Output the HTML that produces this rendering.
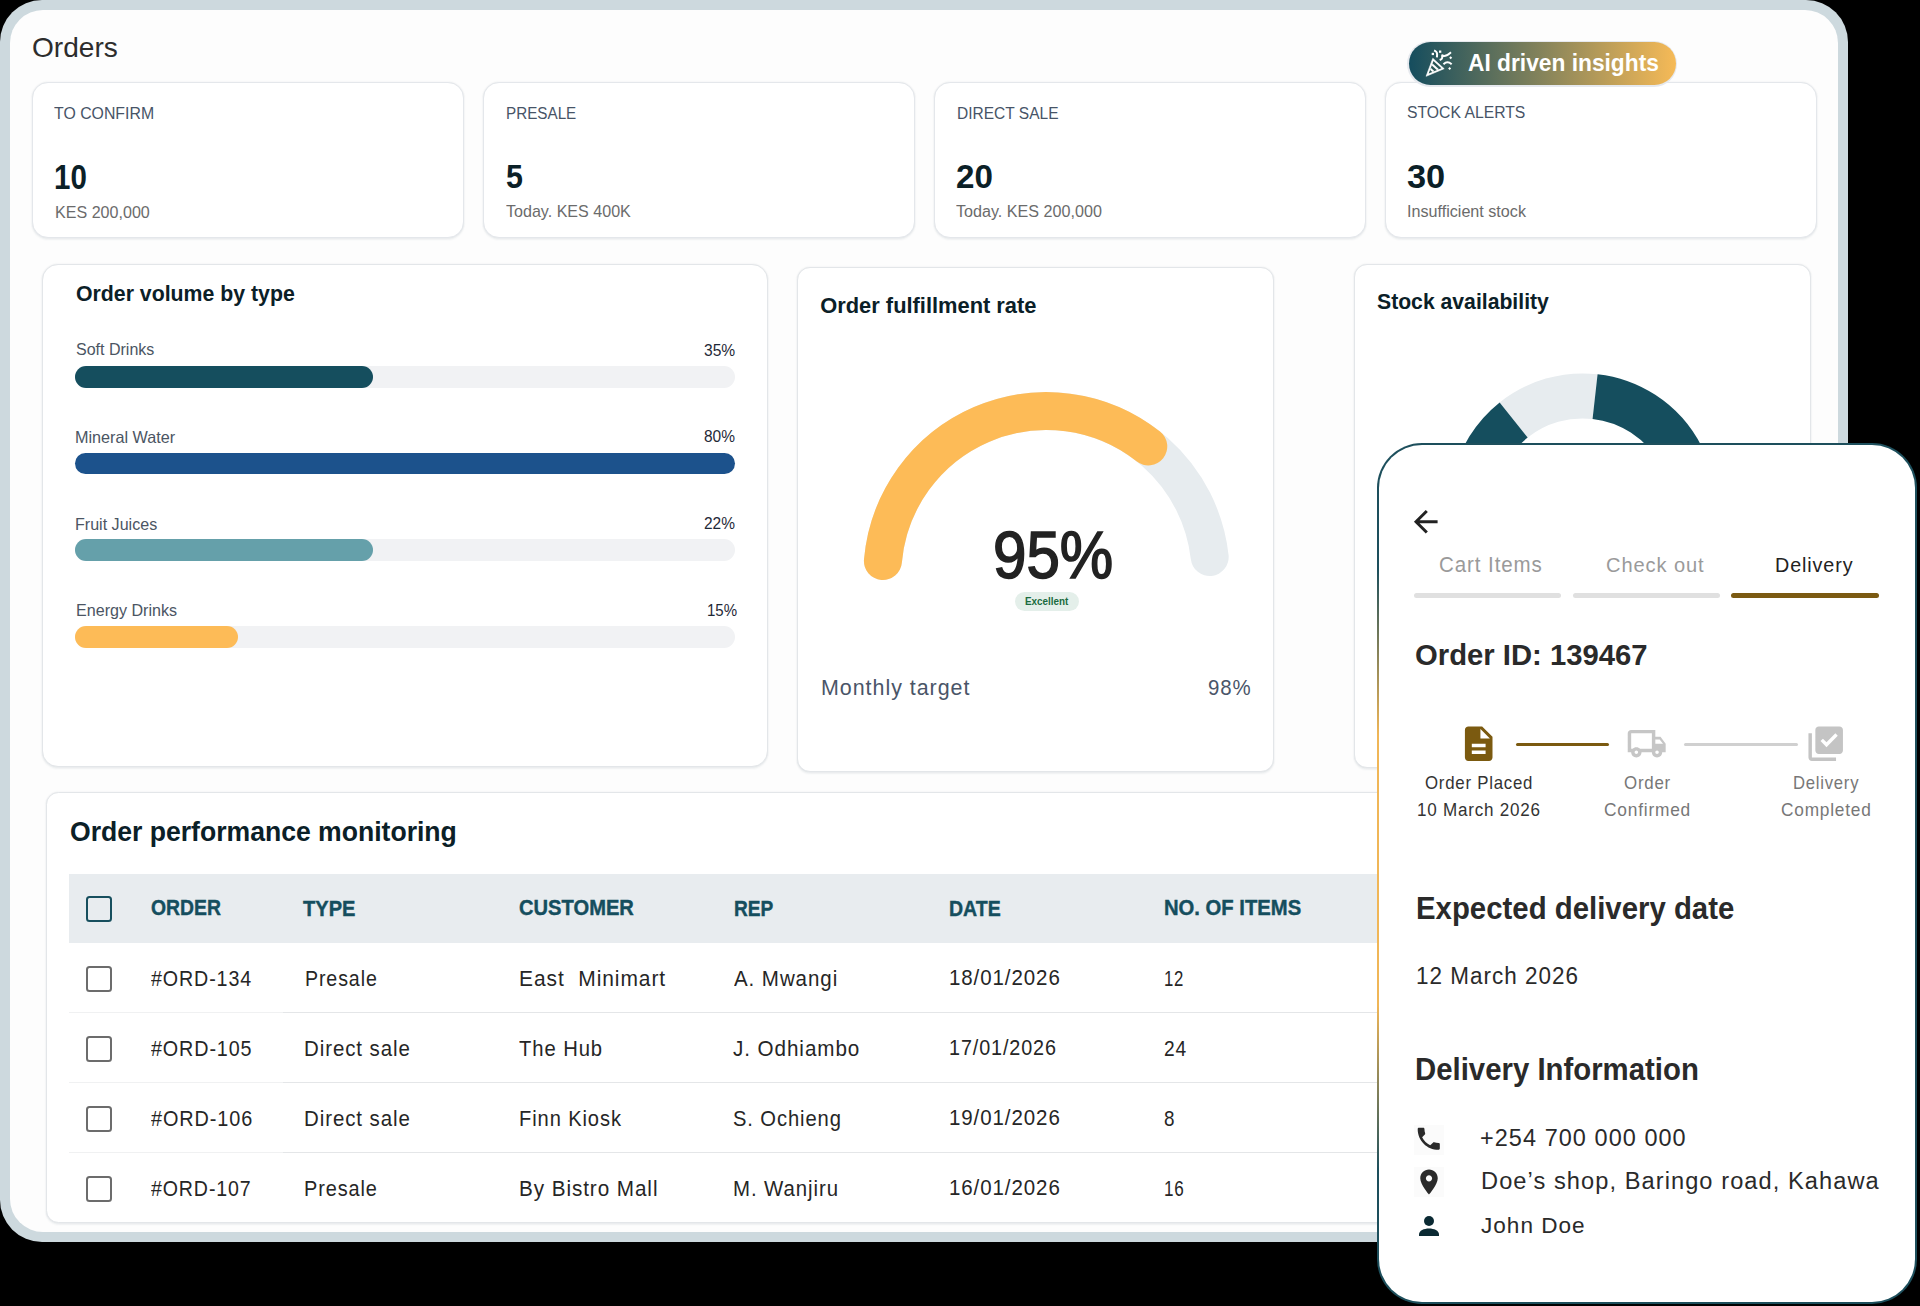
<!DOCTYPE html>
<html><head><meta charset="utf-8"><title>Orders</title><style>
html,body{margin:0;padding:0;}
body{width:1920px;height:1306px;background:#000;position:relative;overflow:hidden;font-family:"Liberation Sans", sans-serif;}
.t{position:absolute;line-height:1;white-space:nowrap;transform-origin:0 0;}
.r{position:absolute;}
</style></head><body>
<div class="r" style="left:0px;top:0px;width:1848px;height:1242px;background:#cdd9de;border-radius:42px;"></div>
<div class="r" style="left:10px;top:10px;width:1828px;height:1222px;background:#fdfdfd;border-radius:33px;"></div>
<div class="t" style="left:32.20px;top:33.59px;font-size:27.17px;color:#2d2d2d;transform:scaleX(1.0345);">Orders</div>
<div class="r" style="left:31.6px;top:81.7px;width:432.1px;height:156.6px;background:#fff;border:1px solid #e4e7eb;border-radius:16px;box-sizing:border-box;box-shadow:0 0 2px rgba(40,60,80,0.10),0 1.5px 2px rgba(40,60,80,0.06);"></div>
<div class="r" style="left:482.7px;top:81.7px;width:432.1px;height:156.6px;background:#fff;border:1px solid #e4e7eb;border-radius:16px;box-sizing:border-box;box-shadow:0 0 2px rgba(40,60,80,0.10),0 1.5px 2px rgba(40,60,80,0.06);"></div>
<div class="r" style="left:933.8px;top:81.7px;width:432.1px;height:156.6px;background:#fff;border:1px solid #e4e7eb;border-radius:16px;box-sizing:border-box;box-shadow:0 0 2px rgba(40,60,80,0.10),0 1.5px 2px rgba(40,60,80,0.06);"></div>
<div class="r" style="left:1384.9px;top:81.7px;width:432.1px;height:156.6px;background:#fff;border:1px solid #e4e7eb;border-radius:16px;box-sizing:border-box;box-shadow:0 0 2px rgba(40,60,80,0.10),0 1.5px 2px rgba(40,60,80,0.06);"></div>
<div class="t" style="left:54.30px;top:104.94px;font-size:17.19px;color:#475467;transform:scaleX(0.9222);">TO CONFIRM</div>
<div class="t" style="left:505.60px;top:104.84px;font-size:17.19px;color:#475467;transform:scaleX(0.8864);">PRESALE</div>
<div class="t" style="left:956.90px;top:105.16px;font-size:17.05px;color:#475467;transform:scaleX(0.9114);">DIRECT SALE</div>
<div class="t" style="left:1407.20px;top:105.21px;font-size:16.76px;color:#475467;transform:scaleX(0.9390);">STOCK ALERTS</div>
<div class="t" style="left:54.00px;top:159.61px;font-size:34.24px;color:#0b2027;font-weight:bold;transform:scaleX(0.8614);">10</div>
<div class="t" style="left:505.60px;top:159.65px;font-size:33.72px;color:#0b2027;font-weight:bold;transform:scaleX(0.9014);">5</div>
<div class="t" style="left:956.40px;top:159.91px;font-size:33.52px;color:#0b2027;font-weight:bold;transform:scaleX(0.9898);">20</div>
<div class="t" style="left:1407.20px;top:159.81px;font-size:33.52px;color:#0b2027;font-weight:bold;transform:scaleX(1.0247);">30</div>
<div class="t" style="left:54.50px;top:203.99px;font-size:16.19px;color:#6b6b6b;transform:scaleX(0.9935);">KES 200,000</div>
<div class="t" style="left:505.60px;top:203.79px;font-size:16.55px;color:#6b6b6b;transform:scaleX(0.9727);">Today. KES 400K</div>
<div class="t" style="left:956.40px;top:204.15px;font-size:16.00px;color:#6b6b6b;transform:scaleX(1.0083);">Today. KES 200,000</div>
<div class="t" style="left:1407.20px;top:203.77px;font-size:16.69px;color:#6b6b6b;transform:scaleX(0.9667);">Insufficient stock</div>
<div class="r" style="left:1407px;top:40.5px;width:270px;height:46px;background:#e6e9ee;border-radius:23px;"></div>
<div class="r" style="left:1408.5px;top:42px;width:267px;height:43px;background:linear-gradient(90deg,#154d5e 0%,#f6ba57 100%);border-radius:21.5px;"></div>
<div class="t" style="left:1468.00px;top:51.34px;font-size:24.34px;color:#fff;font-weight:bold;transform:scaleX(0.9351);">AI driven insights</div>
<svg class="r" style="left:1418px;top:44px" width="40" height="40" viewBox="0 0 40 40"><defs><clipPath id="ci"><polygon points="10.71,29.58 15.43,16.91 23.45,24.23"/></clipPath></defs><polygon points="8.10,32.30 14.80,14.30 26.20,24.70" fill="#fff" stroke="#fff" stroke-width="0.6" stroke-linejoin="round"/><polygon points="10.71,29.58 15.43,16.91 23.45,24.23" fill="#2c5857"/><g clip-path="url(#ci)"><line x1="-3.35" y1="4.52" x2="26.21" y2="31.48" stroke="#fff" stroke-width="2.0"/><line x1="-6.32" y1="7.77" x2="23.24" y2="34.73" stroke="#fff" stroke-width="2.0"/></g><g fill="none" stroke="#fff" stroke-width="2" stroke-linecap="square" stroke-linejoin="round"><path d="M17 6.9 C18.7 7.6 19.4 9.6 19 12.4"/><path d="M22.6 15.6 C23.9 15 24.6 13.6 24.2 11.3 C26.4 13.1 29 11.6 32.2 8.9"/><path d="M26.2 19.6 C27.8 17.7 31 17.6 32.9 19.6"/></g><g fill="#fff"><rect x="13.7" y="8.8" width="2.3" height="2.3"/><rect x="21" y="6.5" width="2.3" height="2.3"/><path d="M32.7 12.2 L34.2 13.7 L32.7 15.2 L31.2 13.7Z"/><path d="M31.6 22.9 L33.1 24.4 L31.6 25.9 L30.1 24.4Z"/></g></svg>
<div class="r" style="left:42.1px;top:264.4px;width:726px;height:502.7px;background:#fff;border:1px solid #e3e6e9;border-radius:16px;box-sizing:border-box;box-shadow:0 0 2px rgba(40,60,80,0.10),0 1.5px 2px rgba(40,60,80,0.06);"></div>
<div class="t" style="left:75.60px;top:281.91px;font-size:22.90px;color:#0b2027;font-weight:bold;transform:scaleX(0.9295);">Order volume by type</div>
<div class="t" style="left:75.60px;top:341.94px;font-size:16.97px;color:#4b5563;transform:scaleX(0.9450);">Soft Drinks</div>
<div class="t" style="left:75.40px;top:429.12px;font-size:16.28px;color:#4b5563;transform:scaleX(0.9950);">Mineral Water</div>
<div class="t" style="left:75.40px;top:516.50px;font-size:15.59px;color:#4b5563;transform:scaleX(1.0317);">Fruit Juices</div>
<div class="t" style="left:75.70px;top:602.97px;font-size:15.86px;color:#4b5563;transform:scaleX(1.0149);">Energy Drinks</div>
<div class="t" style="left:703.75px;top:342.06px;font-size:17.05px;color:#1f2937;transform:scaleX(0.9160);">35%</div>
<div class="t" style="left:703.70px;top:428.71px;font-size:16.76px;color:#1f2937;transform:scaleX(0.9242);">80%</div>
<div class="t" style="left:703.70px;top:515.51px;font-size:16.76px;color:#1f2937;transform:scaleX(0.9242);">22%</div>
<div class="t" style="left:706.90px;top:602.30px;font-size:17.00px;color:#1f2937;transform:scaleX(0.8847);">15%</div>
<div class="r" style="left:75px;top:366px;width:660px;height:21.5px;background:#f1f2f4;border-radius:11px;"></div>
<div class="r" style="left:75px;top:366px;width:298px;height:21.5px;background:#154e5e;border-radius:11px;"></div>
<div class="r" style="left:75px;top:452.6px;width:660px;height:21.5px;background:#f1f2f4;border-radius:11px;"></div>
<div class="r" style="left:75px;top:452.6px;width:660px;height:21.5px;background:#1c528c;border-radius:11px;"></div>
<div class="r" style="left:75px;top:539.1px;width:660px;height:21.5px;background:#f1f2f4;border-radius:11px;"></div>
<div class="r" style="left:75px;top:539.1px;width:298px;height:21.5px;background:#65a0aa;border-radius:11px;"></div>
<div class="r" style="left:75px;top:626px;width:660px;height:21.5px;background:#f1f2f4;border-radius:11px;"></div>
<div class="r" style="left:75px;top:626px;width:163px;height:21.5px;background:#fdbb57;border-radius:11px;"></div>
<div class="r" style="left:797.1px;top:267px;width:477.4px;height:504.7px;background:#fff;border:1px solid #e3e6e9;border-radius:13px;box-sizing:border-box;box-shadow:0 0 2px rgba(40,60,80,0.10),0 1.5px 2px rgba(40,60,80,0.06);"></div>
<div class="t" style="left:820.25px;top:294.94px;font-size:21.86px;color:#0b2027;font-weight:bold;">Order fulfillment rate</div>
<svg class="r" style="left:0;top:0" width="1920" height="1306"><path d="M882.92 560.99 A164.2 164.2 0 0 1 1209.68 557.00" fill="none" stroke="#e7ecef" stroke-width="38" stroke-linecap="round"/><path d="M882.92 560.99 A164.2 164.2 0 0 1 1148.27 446.44" fill="none" stroke="#fdbb57" stroke-width="38" stroke-linecap="round"/></svg>
<div class="t" style="left:993.30px;top:521.81px;font-size:66.53px;color:#222;transform:scaleX(0.9036);-webkit-text-stroke:1.6px #222;">95%</div>
<div class="r" style="left:1015.2px;top:592px;width:63.6px;height:19px;background:#e4efea;border-radius:10px;"></div>
<div class="t" style="left:1024.90px;top:595.92px;font-size:11.31px;color:#1a6b40;font-weight:bold;transform:scaleX(0.8739);">Excellent</div>
<div class="t" style="left:821.40px;top:677.45px;font-size:21.79px;color:#4a5568;transform:scaleX(0.9846);letter-spacing:0.981px;">Monthly target</div>
<div class="t" style="left:1208.20px;top:677.36px;font-size:22.49px;color:#4a5568;transform:scaleX(0.9079);letter-spacing:1.012px;">98%</div>
<div class="r" style="left:1354px;top:264px;width:457px;height:504px;background:#fff;border:1px solid #e3e6e9;border-radius:13px;box-sizing:border-box;box-shadow:0 0 2px rgba(40,60,80,0.10),0 1.5px 2px rgba(40,60,80,0.06);"></div>
<div class="t" style="left:1377.10px;top:290.91px;font-size:22.07px;color:#0b2027;font-weight:bold;transform:scaleX(0.9599);">Stock availability</div>
<svg class="r" style="left:0;top:0" width="1920" height="1306"><path d="M1513.66 420.01 A110.9 110.9 0 0 1 1595.06 396.59" fill="none" stroke="#e7ecef" stroke-width="45.0"/><path d="M1595.06 396.59 A110.9 110.9 0 0 1 1678.74 562.25" fill="none" stroke="#154e5e" stroke-width="45.0"/><path d="M1486.66 562.25 A110.9 110.9 0 0 1 1513.66 420.01" fill="none" stroke="#154e5e" stroke-width="45.0"/></svg>
<div class="r" style="left:46.4px;top:791.7px;width:1500px;height:431.3px;background:#fff;border:1px solid #e3e6e9;border-radius:12.5px;box-sizing:border-box;box-shadow:0 0 2px rgba(40,60,80,0.10),0 1.5px 2px rgba(40,60,80,0.06);"></div>
<div class="t" style="left:69.60px;top:817.73px;font-size:27.72px;color:#0b2027;font-weight:bold;transform:scaleX(0.9586);">Order performance monitoring</div>
<div class="r" style="left:69px;top:874.2px;width:1400px;height:69.3px;background:#e8ecef;"></div>
<div class="r" style="left:85.8px;top:895.8px;width:25.9px;height:25.9px;border:2.4px solid #174f5e;border-radius:3.5px;box-sizing:border-box;"></div>
<div class="t" style="left:151.00px;top:898.33px;font-size:21.29px;color:#154e5e;font-weight:bold;transform:scaleX(0.9106);-webkit-text-stroke:0.4px #154e5e;">ORDER</div>
<div class="t" style="left:303.40px;top:898.07px;font-size:21.60px;color:#154e5e;font-weight:bold;transform:scaleX(0.9288);-webkit-text-stroke:0.4px #154e5e;">TYPE</div>
<div class="t" style="left:518.60px;top:898.33px;font-size:21.29px;color:#154e5e;font-weight:bold;transform:scaleX(0.9466);-webkit-text-stroke:0.4px #154e5e;">CUSTOMER</div>
<div class="t" style="left:733.90px;top:898.07px;font-size:21.60px;color:#154e5e;font-weight:bold;transform:scaleX(0.8850);-webkit-text-stroke:0.4px #154e5e;">REP</div>
<div class="t" style="left:949.10px;top:898.07px;font-size:21.60px;color:#154e5e;font-weight:bold;transform:scaleX(0.9039);-webkit-text-stroke:0.4px #154e5e;">DATE</div>
<div class="t" style="left:1163.80px;top:898.33px;font-size:21.29px;color:#154e5e;font-weight:bold;transform:scaleX(0.9508);-webkit-text-stroke:0.4px #154e5e;">NO. OF ITEMS</div>
<div class="r" style="left:85.8px;top:965.9px;width:25.9px;height:25.9px;border:2.4px solid #6c6c6c;border-radius:3.5px;box-sizing:border-box;"></div>
<div class="t" style="left:150.80px;top:967.68px;font-size:22.35px;color:#262626;transform:scaleX(0.8799);letter-spacing:1.006px;">#ORD-134</div>
<div class="t" style="left:304.50px;top:967.80px;font-size:22.21px;color:#262626;transform:scaleX(0.8832);letter-spacing:0.999px;">Presale</div>
<div class="t" style="left:519.40px;top:967.80px;font-size:22.21px;color:#262626;transform:scaleX(0.9439);letter-spacing:0.999px;">East&nbsp; Minimart</div>
<div class="t" style="left:734.00px;top:967.80px;font-size:22.21px;color:#262626;transform:scaleX(0.9243);letter-spacing:0.999px;">A. Mwangi</div>
<div class="t" style="left:948.90px;top:968.38px;font-size:21.52px;color:#262626;transform:scaleX(0.9518);letter-spacing:0.968px;">18/01/2026</div>
<div class="t" style="left:1163.60px;top:967.68px;font-size:22.35px;color:#262626;transform:scaleX(0.7502);letter-spacing:1.006px;">12</div>
<div class="r" style="left:69px;top:1011.9px;width:214px;height:1.2px;background:#f0f1f2;"></div>
<div class="r" style="left:283px;top:1011.9px;width:1200px;height:1.2px;background:#e4e6e8;"></div>
<div class="r" style="left:85.8px;top:1035.9px;width:25.9px;height:25.9px;border:2.4px solid #6c6c6c;border-radius:3.5px;box-sizing:border-box;"></div>
<div class="t" style="left:151.10px;top:1037.68px;font-size:22.35px;color:#262626;transform:scaleX(0.8835);letter-spacing:1.006px;">#ORD-105</div>
<div class="t" style="left:303.90px;top:1037.80px;font-size:22.21px;color:#262626;transform:scaleX(0.9217);letter-spacing:0.999px;">Direct sale</div>
<div class="t" style="left:519.20px;top:1037.80px;font-size:22.21px;color:#262626;transform:scaleX(0.9116);letter-spacing:0.999px;">The Hub</div>
<div class="t" style="left:733.10px;top:1037.80px;font-size:22.21px;color:#262626;transform:scaleX(0.9295);letter-spacing:0.999px;">J. Odhiambo</div>
<div class="t" style="left:949.00px;top:1038.38px;font-size:21.52px;color:#262626;transform:scaleX(0.9192);letter-spacing:0.968px;">17/01/2026</div>
<div class="t" style="left:1163.90px;top:1037.68px;font-size:22.35px;color:#262626;transform:scaleX(0.8585);letter-spacing:1.006px;">24</div>
<div class="r" style="left:69px;top:1081.9px;width:214px;height:1.2px;background:#f0f1f2;"></div>
<div class="r" style="left:283px;top:1081.9px;width:1200px;height:1.2px;background:#e4e6e8;"></div>
<div class="r" style="left:85.8px;top:1105.9px;width:25.9px;height:25.9px;border:2.4px solid #6c6c6c;border-radius:3.5px;box-sizing:border-box;"></div>
<div class="t" style="left:151.10px;top:1107.68px;font-size:22.35px;color:#262626;transform:scaleX(0.8887);letter-spacing:1.006px;">#ORD-106</div>
<div class="t" style="left:303.90px;top:1107.80px;font-size:22.21px;color:#262626;transform:scaleX(0.9217);letter-spacing:0.999px;">Direct sale</div>
<div class="t" style="left:519.20px;top:1107.80px;font-size:22.21px;color:#262626;transform:scaleX(0.9051);letter-spacing:0.999px;">Finn Kiosk</div>
<div class="t" style="left:733.10px;top:1107.80px;font-size:22.21px;color:#262626;transform:scaleX(0.9079);letter-spacing:0.999px;">S. Ochieng</div>
<div class="t" style="left:949.00px;top:1108.38px;font-size:21.52px;color:#262626;transform:scaleX(0.9518);letter-spacing:0.968px;">19/01/2026</div>
<div class="t" style="left:1163.90px;top:1107.68px;font-size:22.35px;color:#262626;transform:scaleX(0.8450);letter-spacing:1.006px;">8</div>
<div class="r" style="left:69px;top:1151.9px;width:214px;height:1.2px;background:#f0f1f2;"></div>
<div class="r" style="left:283px;top:1151.9px;width:1200px;height:1.2px;background:#e4e6e8;"></div>
<div class="r" style="left:85.8px;top:1175.9px;width:25.9px;height:25.9px;border:2.4px solid #6c6c6c;border-radius:3.5px;box-sizing:border-box;"></div>
<div class="t" style="left:151.10px;top:1177.68px;font-size:22.35px;color:#262626;transform:scaleX(0.8756);letter-spacing:1.006px;">#ORD-107</div>
<div class="t" style="left:303.90px;top:1177.80px;font-size:22.21px;color:#262626;transform:scaleX(0.8967);letter-spacing:0.999px;">Presale</div>
<div class="t" style="left:519.20px;top:1177.80px;font-size:22.21px;color:#262626;transform:scaleX(0.9313);letter-spacing:0.999px;">By Bistro Mall</div>
<div class="t" style="left:733.10px;top:1177.80px;font-size:22.21px;color:#262626;transform:scaleX(0.9188);letter-spacing:0.999px;">M. Wanjiru</div>
<div class="t" style="left:949.00px;top:1178.38px;font-size:21.52px;color:#262626;transform:scaleX(0.9518);letter-spacing:0.968px;">16/01/2026</div>
<div class="t" style="left:1163.90px;top:1177.68px;font-size:22.35px;color:#262626;transform:scaleX(0.7657);letter-spacing:1.006px;">16</div>
<div class="r" style="left:1377px;top:443px;width:540px;height:861px;background:radial-gradient(200px 300px at 0px 427px,#f0b657 0%,#f0b657 45%,#1d4f5c 100%);border-radius:45px;"></div>
<div class="r" style="left:1379px;top:445px;width:536px;height:857px;background:#fff;border-radius:43px;"></div>
<svg class="r" style="left:1408.40px;top:503.50px" width="35.52" height="35.52" viewBox="0 0 24 24"><path d="M7.825 13 13.425 18.6 12 20 4 12 12 4 13.425 5.4 7.825 11H20v2Z" fill="#222"/></svg>
<div class="t" style="left:1438.50px;top:553.55px;font-size:21.20px;color:#9a9a9a;transform:scaleX(0.9673);letter-spacing:0.954px;">Cart Items</div>
<div class="t" style="left:1605.70px;top:553.63px;font-size:21.10px;color:#9a9a9a;transform:scaleX(0.9522);letter-spacing:0.950px;">Check out</div>
<div class="t" style="left:1775.00px;top:553.63px;font-size:21.10px;color:#222;transform:scaleX(0.9364);letter-spacing:0.950px;">Delivery</div>
<div class="r" style="left:1414.3px;top:593px;width:147.2px;height:5.2px;background:#e0e0e0;border-radius:3px;"></div>
<div class="r" style="left:1573.2px;top:593px;width:146.6px;height:5.2px;background:#e0e0e0;border-radius:3px;"></div>
<div class="r" style="left:1731.25px;top:593px;width:147.35px;height:5.2px;background:#7b5a12;border-radius:3px;"></div>
<div class="t" style="left:1414.75px;top:639.91px;font-size:30.34px;color:#2a2a2a;font-weight:bold;transform:scaleX(0.9645);">Order ID: 139467</div>
<svg class="r" style="left:1458.20px;top:722.50px" width="41.40" height="41.40" viewBox="0 0 24 24"><path fill="#7b5a10" d="M14 2H6c-1.1 0-1.99.9-1.99 2L4 20c0 1.1.89 2 1.99 2H18c1.1 0 2-.9 2-2V8l-6-6zm2 16H8v-2h8v2zm0-4H8v-2h8v2zm-3-5V3.5L18.5 9H13z"/></svg>
<div class="r" style="left:1516.25px;top:743.25px;width:92.5px;height:3.2px;background:#7b5a10;border-radius:1.6px;"></div>
<svg class="r" style="left:1626.30px;top:722.60px" width="41.40" height="41.40" viewBox="0 0 24 24"><path fill="#c6c6c6" d="M20 8h-3V4H3c-1.1 0-2 .9-2 2v11h2c0 1.66 1.34 3 3 3s3-1.34 3-3h6c0 1.66 1.34 3 3 3s3-1.34 3-3h2v-5l-3-4zm-.5 1.5l1.96 2.5H17V9.5h2.5zM6 18c-.55 0-1-.45-1-1s.45-1 1-1 1 .45 1 1-.45 1-1 1zm2.22-3c-.55-.61-1.33-1-2.22-1s-1.67.39-2.22 1H3V6h12v9H8.22zM18 18c-.55 0-1-.45-1-1s.45-1 1-1 1 .45 1 1-.45 1-1 1z"/></svg>
<div class="r" style="left:1683.75px;top:743.25px;width:113.75px;height:3.2px;background:#d0d0d0;border-radius:1.6px;"></div>
<svg class="r" style="left:1805.00px;top:722.55px" width="41.40" height="41.40" viewBox="0 0 24 24"><path fill="#c4c4c4" d="M20 2H8c-1.1 0-2 .9-2 2v12c0 1.1.9 2 2 2h12c1.1 0 2-.9 2-2V4c0-1.1-.9-2-2-2zm-7.53 12L9 10.5l1.4-1.41 2.07 2.08L17.6 6 19 7.41 12.47 14zM4 6H2v14c0 1.1.9 2 2 2h14v-2H4V6z"/></svg>
<div class="t" style="left:1425.00px;top:775.02px;font-size:17.93px;color:#333;transform:scaleX(0.9387);letter-spacing:0.807px;">Order Placed</div>
<div class="t" style="left:1417.00px;top:801.83px;font-size:17.86px;color:#333;transform:scaleX(0.9549);letter-spacing:0.804px;">10 March 2026</div>
<div class="t" style="left:1623.75px;top:775.02px;font-size:17.93px;color:#777;transform:scaleX(0.9427);letter-spacing:0.807px;">Order</div>
<div class="t" style="left:1603.75px;top:801.83px;font-size:17.86px;color:#777;transform:scaleX(0.9710);letter-spacing:0.804px;">Confirmed</div>
<div class="t" style="left:1793.25px;top:775.02px;font-size:17.93px;color:#777;transform:scaleX(0.9302);letter-spacing:0.807px;">Delivery</div>
<div class="t" style="left:1780.75px;top:801.83px;font-size:17.86px;color:#777;transform:scaleX(0.9670);letter-spacing:0.804px;">Completed</div>
<div class="t" style="left:1415.60px;top:892.87px;font-size:30.62px;color:#2a2a2a;font-weight:bold;transform:scaleX(0.9594);">Expected delivery date</div>
<div class="t" style="left:1415.60px;top:965.35px;font-size:23.45px;color:#2a2a2a;transform:scaleX(0.9587);letter-spacing:1.055px;">12 March 2026</div>
<div class="t" style="left:1415.40px;top:1054.74px;font-size:30.90px;color:#2a2a2a;font-weight:bold;transform:scaleX(0.9503);">Delivery Information</div>
<div class="r" style="left:1414px;top:1124.5px;width:30px;height:30px;background:#fbfbfb;"></div>
<svg class="r" style="left:1414.40px;top:1124.40px" width="29.50" height="29.50" viewBox="0 0 24 24"><path fill="#2a2a2a" d="M6.62 10.79c1.44 2.83 3.76 5.14 6.59 6.59l2.2-2.2c.27-.27.67-.36 1.02-.24 1.12.37 2.33.57 3.57.57.55 0 1 .45 1 1V20c0 .55-.45 1-1 1-9.39 0-17-7.61-17-17 0-.55.45-1 1-1h3.5c.55 0 1 .45 1 1 0 1.25.2 2.45.57 3.57.11.35.03.74-.25 1.02l-2.2 2.2z"/></svg>
<div class="t" style="left:1480.00px;top:1126.85px;font-size:23.21px;color:#2a2a2a;transform:scaleX(1.0111);letter-spacing:1.044px;">+254 700 000 000</div>
<div class="r" style="left:1414px;top:1167px;width:30px;height:30px;background:#fbfbfb;"></div>
<svg class="r" style="left:1414.10px;top:1167.15px" width="30.00" height="30.00" viewBox="0 0 24 24"><path fill="#2a2a2a" d="M12 2C8.13 2 5 5.13 5 9c0 5.25 7 13 7 13s7-7.75 7-13c0-3.87-3.13-7-7-7zm0 9.5c-1.38 0-2.5-1.12-2.5-2.5s1.12-2.5 2.5-2.5 2.5 1.12 2.5 2.5-1.12 2.5-2.5 2.5z"/></svg>
<div class="t" style="left:1480.50px;top:1170.35px;font-size:23.45px;color:#2a2a2a;transform:scaleX(1.0082);letter-spacing:1.055px;">Doe&#8217;s shop, Baringo road, Kahawa</div>
<svg class="r" style="left:1414.10px;top:1211.00px" width="30.00" height="30.00" viewBox="0 0 24 24"><g fill="#0b2a33"><circle cx="12" cy="8" r="4"/><path d="M4 20v-1.2C4 15.6 8 14 12 14s8 1.6 8 4.8V20z"/></g></svg>
<div class="t" style="left:1480.50px;top:1214.31px;font-size:22.90px;color:#2a2a2a;transform:scaleX(0.9854);letter-spacing:1.030px;">John Doe</div>
</body></html>
